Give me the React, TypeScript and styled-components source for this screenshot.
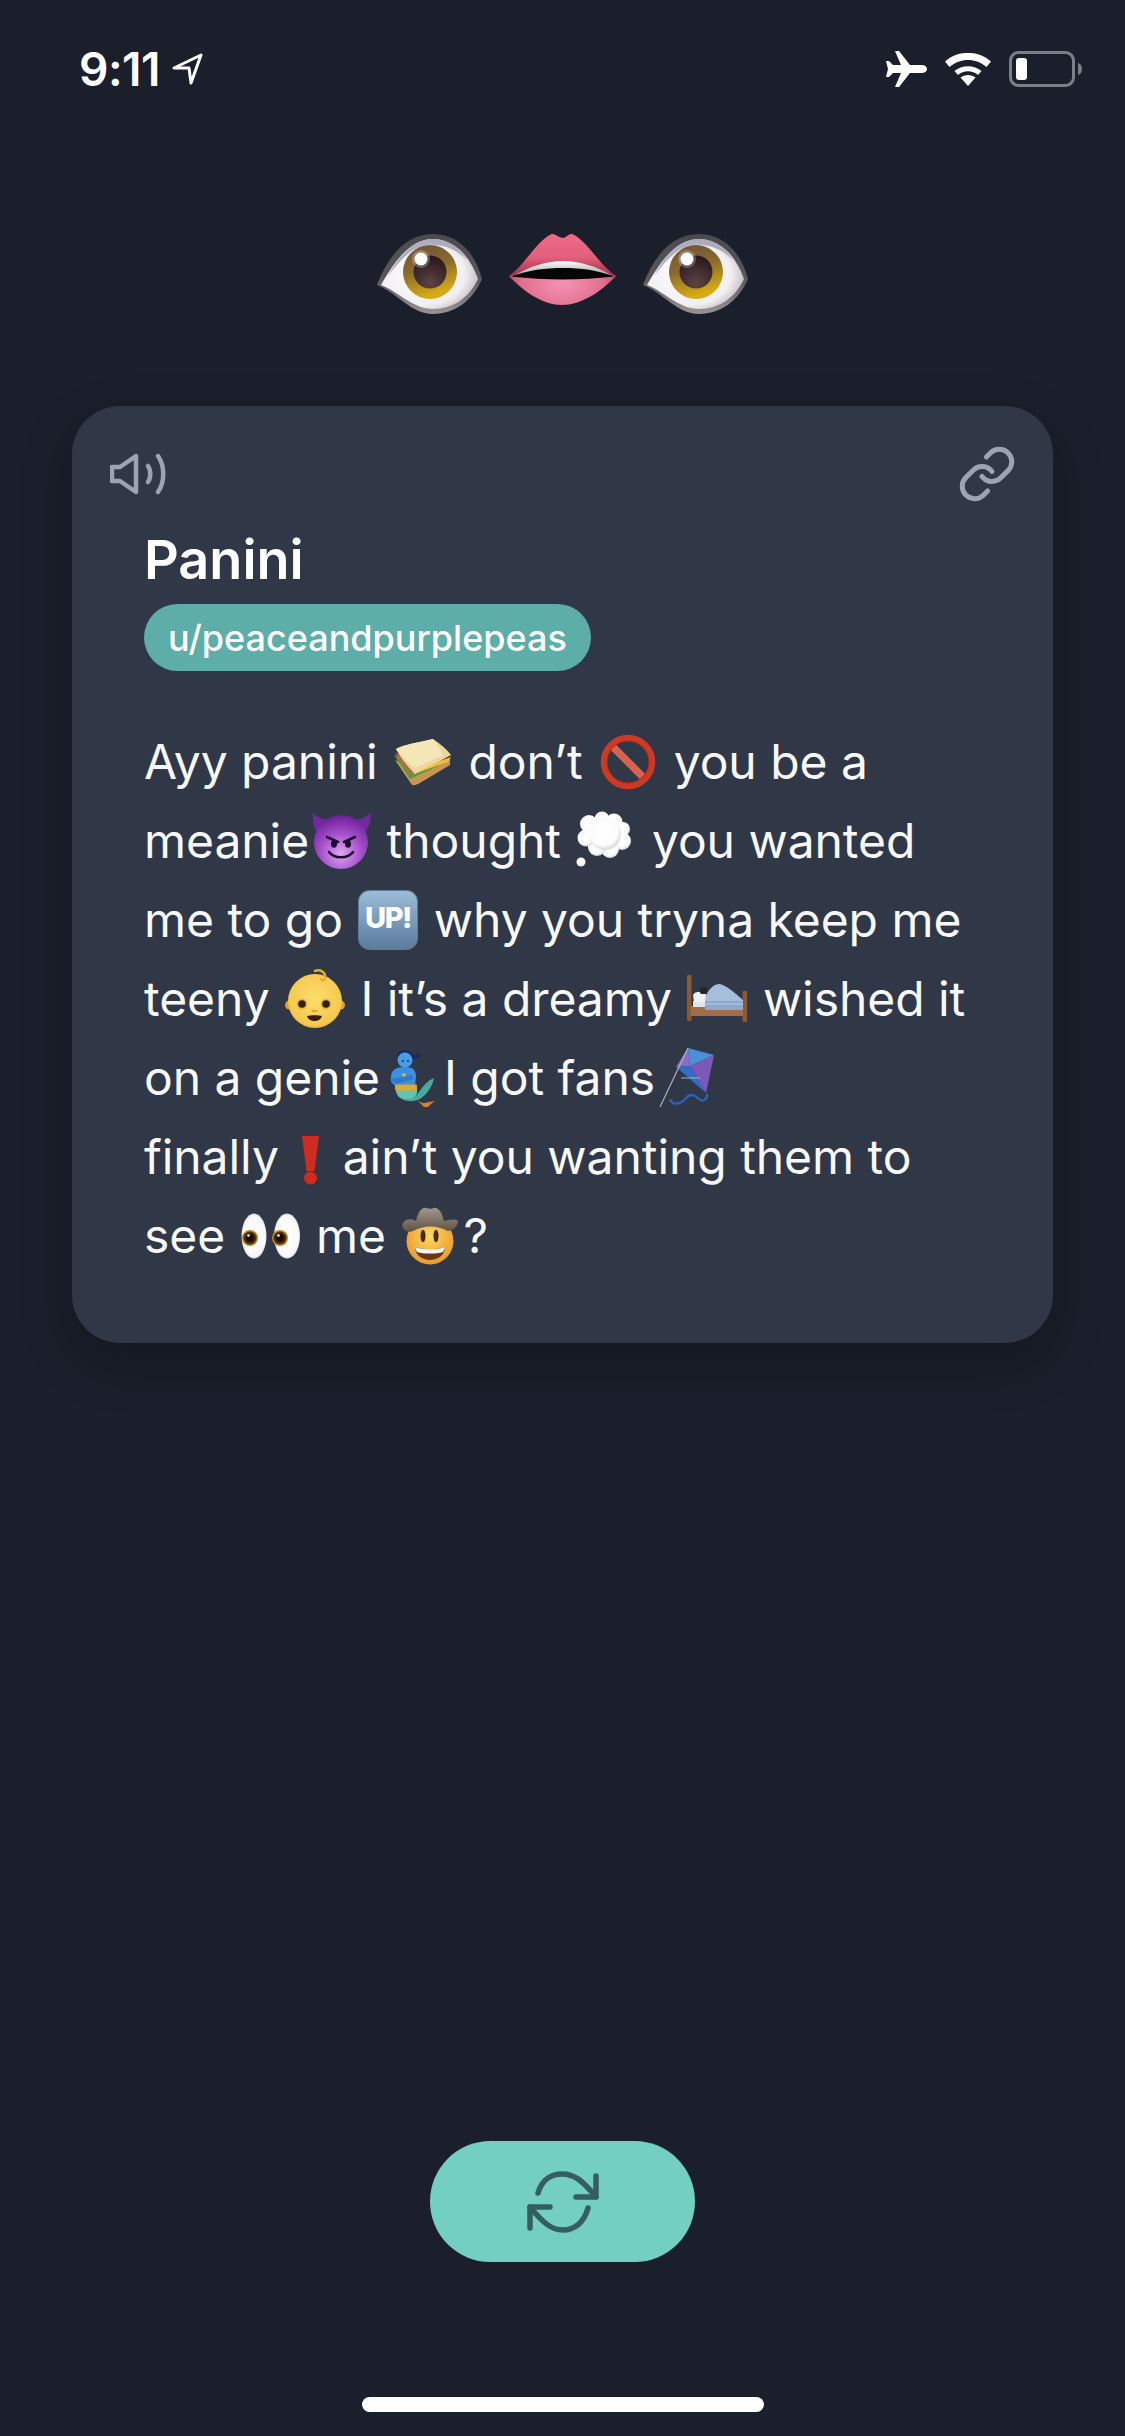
import React from "react";
import styled, { createGlobalStyle } from "styled-components";

const Global = createGlobalStyle`
  html, body { margin: 0; padding: 0; background: #1b1f2b; }
`;

const Screen = styled.div`
  width: 1125px;
  height: 2436px;
  background: #1b1f2b;
  display: flex;
  flex-direction: column;
  font-family: Inter, "Liberation Sans", sans-serif;
  color: #fff;
  overflow: hidden;
`;

const StatusBar = styled.header`
  height: 138px;
  padding: 50px 42px 0 79px;
  box-sizing: border-box;
  display: flex;
  justify-content: space-between;
  align-items: flex-start;
`;

const StatusGroup = styled.div<{ $gap: number }>`
  display: flex;
  align-items: center;
  gap: ${(p) => p.$gap}px;
  height: 38px;
`;

const Clock = styled.span`
  font-size: 46px;
  font-weight: 600;
  letter-spacing: -0.5px;
  line-height: 38px;
`;

const FaceRow = styled.div`
  height: 268px;
  box-sizing: border-box;
  padding-top: 96px;
  display: flex;
  justify-content: center;
  align-items: flex-start;
  gap: 27px;
`;

const Card = styled.section`
  margin: 0 72px;
  height: 937px;
  box-sizing: border-box;
  padding: 40px 38px 0;
  background: #303747;
  border-radius: 48px;
  box-shadow: 0 20px 50px rgba(0, 0, 0, 0.25);
`;

const CardTools = styled.div`
  display: flex;
  justify-content: space-between;
  align-items: center;
  height: 56px;
`;

const CardBody = styled.div`
  padding: 0 34px;
`;

const Title = styled.h1`
  margin: 23px 0 0;
  font-size: 54px;
  line-height: 70px;
  font-weight: 600;
  color: #fff;
`;

const Pill = styled.span`
  display: inline-flex;
  align-items: center;
  margin-top: 9px;
  height: 67px;
  padding: 0 24px;
  border-radius: 34px;
  background: #5dada8;
  font-size: 36px;
  font-weight: 500;
  color: #fff;
`;

const Lyrics = styled.p`
  margin: 51px 0 0;
  font-size: 48px;
  letter-spacing: -0.05px;
  line-height: 79px;
  font-weight: 400;
  color: #f7f8fa;
`;

const Emoji = styled.svg<{ $w?: number }>`
  display: inline-block;
  width: ${(p) => p.$w ?? 60}px;
  height: 60px;
  margin: 0 2px;
  vertical-align: -13px;
`;

const Spacer = styled.div`
  flex: 1;
`;

const RefreshButton = styled.button`
  align-self: center;
  width: 265px;
  height: 121px;
  border: 0;
  padding: 0;
  border-radius: 61px;
  background: #74cfc3;
  display: flex;
  align-items: center;
  justify-content: center;
`;

const HomeBar = styled.div`
  align-self: center;
  width: 402px;
  height: 15px;
  margin: 135px 0 24px;
  border-radius: 8px;
  background: #fff;
`;

const Eye = ({ id }: { id: string }) => (
  <svg width="105" height="80" viewBox="0 0 105 80">
    <defs>
      <radialGradient id={`${id}s`} cx="0.42" cy="0.5" r="0.62">
        <stop offset="0" stopColor="#fff" />
        <stop offset="0.72" stopColor="#f2eff2" />
        <stop offset="1" stopColor="#bdb5bc" />
      </radialGradient>
      <linearGradient id={`${id}i`} x1="0" y1="0" x2="0.3" y2="1">
        <stop offset="0" stopColor="#6a503d" />
        <stop offset="0.5" stopColor="#8a6a2c" />
        <stop offset="1" stopColor="#d8ab12" />
      </linearGradient>
      <radialGradient id={`${id}p`} cx="0.5" cy="0.85" r="0.8">
        <stop offset="0" stopColor="#5e4244" />
        <stop offset="1" stopColor="#2b1a1d" />
      </radialGradient>
      <linearGradient id={`${id}o`} x1="0" y1="0" x2="0" y2="1">
        <stop offset="0" stopColor="#4a494d" />
        <stop offset="0.55" stopColor="#5a585c" />
        <stop offset="1" stopColor="#9a9297" />
      </linearGradient>
    </defs>
    <path d="M0 51C10 24 28 0 56 0 80 0 98 18 105 45 96 66 78 80 56 80 34 80 22 60 0 51Z" fill={`url(#${id}o)`} />
    <path d="M4 51C16 30 32 5 56 5 78 5 94 24 101 45 92 64 76 75 56 75 36 75 22 58 4 51Z" fill={`url(#${id}s)`} />
    <path d="M11 42C20 24 36 5 56 5 70 5 82 13 90 26 78 14 64 10 50 11 34 13 22 28 11 42Z" fill="#a5a1b6" opacity="0.85" />
    <circle cx="53" cy="38" r="27" fill={`url(#${id}i)`} />
    <circle cx="53" cy="38" r="16.500" fill={`url(#${id}p)`} />
    <circle cx="44" cy="25" r="9" fill="#fff" opacity="0.25" />
    <circle cx="44" cy="25" r="6.500" fill="#fff" />
  </svg>
);

const Lips = () => (
  <svg width="107" height="71" viewBox="0 0 107 71">
    <defs>
      <linearGradient id="lu" x1="0" y1="0" x2="0" y2="1">
        <stop offset="0" stopColor="#ef6a88" />
        <stop offset="0.55" stopColor="#e2607c" />
        <stop offset="1" stopColor="#a82c48" />
      </linearGradient>
      <radialGradient id="ll" cx="0.5" cy="0.68" r="0.55">
        <stop offset="0" stopColor="#f494b6" />
        <stop offset="0.7" stopColor="#e26f8e" />
        <stop offset="1" stopColor="#b83d5c" />
      </radialGradient>
      <linearGradient id="lt" x1="0" y1="0" x2="0" y2="1">
        <stop offset="0" stopColor="#fff" />
        <stop offset="1" stopColor="#8f8f8f" />
      </linearGradient>
    </defs>
    <path d="M0 42C14 34 28 6 43 0 47 0 50 4 54 4 57 4 59 0 63 0 78 6 92 34 107 42 92 58 72 71 53 71 34 71 15 58 0 42Z" fill="url(#ll)" />
    <path d="M0 42C14 34 28 6 43 0 47 0 50 4 54 4 57 4 59 0 63 0 78 6 92 34 107 42L53 38Z" fill="url(#lu)" />
    <path d="M6 41C22 32 38 27 54 27 70 27 86 32 102 41L54 44Z" fill="url(#lt)" />
    <path d="M2 42.500C20 36 36 34 54 34 72 34 88 36 105 42.500 88 44.500 70 45.500 54 45.500 36 45.500 20 44.500 2 42.500Z" fill="#050505" />
  </svg>
);

const Sandwich = () => (
  <Emoji viewBox="0 0 60 60">
    <path d="M2 28L19 53C24 54 28 50 32 48L57 33 57 27 20 36Z" fill="#c7954f" />
    <path d="M1 23L17 47 56 29 20 30Z" fill="#5a9a3e" />
    <path d="M2 21L18 42 52 29 22 27Z" fill="#cf5a47" />
    <path d="M20 38L58 25 55 30 21 42Z" fill="#f2bd3f" />
    <path d="M3 17C12 12 28 10 40 7 48 12 54 18 58 23 46 30 32 36 22 42 14 34 8 26 3 17Z" fill="#ecd89c" />
    <path d="M3 17C12 12 28 10 40 7 44 12 48 18 50 23 40 28 30 32 22 36 14 30 8 24 3 17Z" fill="#f4e6b6" />
  </Emoji>
);

const NoSign = () => (
  <Emoji viewBox="0 0 60 60">
    <path d="M13 13L47 47" stroke="#d9624e" strokeWidth="7.500" />
    <circle cx="30" cy="30" r="24" fill="none" stroke="#cc3a24" strokeWidth="6.500" />
    <circle cx="30" cy="30" r="21" fill="none" stroke="#a82a1a" strokeWidth="1" />
  </Emoji>
);

const Devil = () => (
  <Emoji viewBox="0 0 60 60">
    <defs>
      <radialGradient id="dv" cx="0.5" cy="0.72" r="0.75">
        <stop offset="0" stopColor="#dda6f2" />
        <stop offset="0.5" stopColor="#a651cc" />
        <stop offset="1" stopColor="#661a96" />
      </radialGradient>
    </defs>
    <path d="M2 2C1 12 3 20 10 26L22 10C14 9 7 7 2 2ZM60 2C60 12 57 20 50 26L38 10C46 9 54 7 60 2Z" fill="#6f2a9e" />
    <circle cx="30" cy="31" r="27" fill="url(#dv)" />
    <path d="M16 26L27 31M44 26L33 31" stroke="#1f0b30" strokeWidth="2.600" strokeLinecap="round" />
    <ellipse cx="23" cy="33" rx="3" ry="3.800" fill="#1f0b30" />
    <ellipse cx="37" cy="33" rx="3" ry="3.800" fill="#1f0b30" />
    <path d="M18 41C23 48 37 48 42 41" fill="none" stroke="#1f0b30" strokeWidth="2.600" strokeLinecap="round" />
  </Emoji>
);

const Thought = () => (
  <Emoji viewBox="0 0 60 60">
    <defs>
      <radialGradient id="th" cx="0.45" cy="0.4" r="0.6">
        <stop offset="0" stopColor="#fff" />
        <stop offset="0.75" stopColor="#fcfcfc" />
        <stop offset="1" stopColor="#d6d6d8" />
      </radialGradient>
    </defs>
    <g fill="url(#th)">
      <circle cx="13" cy="13" r="9" />
      <circle cx="26" cy="8" r="7.500" />
      <circle cx="38" cy="11" r="8.500" />
      <circle cx="47" cy="18" r="7" />
      <circle cx="46" cy="30" r="9" />
      <circle cx="34" cy="38" r="9" />
      <circle cx="21" cy="36" r="9" />
      <circle cx="10" cy="27" r="8.500" />
      <circle cx="29" cy="23" r="16" />
      <circle cx="5" cy="51" r="4.500" />
    </g>
  </Emoji>
);

const UpButton = () => (
  <Emoji viewBox="0 0 60 60">
    <defs>
      <linearGradient id="up" x1="0" y1="0" x2="0" y2="1">
        <stop offset="0" stopColor="#9dbcd9" />
        <stop offset="1" stopColor="#5a7b9c" />
      </linearGradient>
    </defs>
    <rect x="0.500" y="0.500" width="59" height="59" rx="11" fill="url(#up)" stroke="#5f7e9d" />
    <text x="30" y="38" textAnchor="middle" fontFamily="Inter, sans-serif" fontWeight="800" fontSize="29" letterSpacing="-1.500" fill="#fff">UP!</text>
  </Emoji>
);

const Baby = () => (
  <Emoji viewBox="0 0 60 60">
    <defs>
      <radialGradient id="bb" cx="0.5" cy="0.45" r="0.65">
        <stop offset="0" stopColor="#fcdc6c" />
        <stop offset="0.75" stopColor="#f6c94f" />
        <stop offset="1" stopColor="#dd9a28" />
      </radialGradient>
    </defs>
    <circle cx="4.500" cy="36" r="4.500" fill="#e2a02c" />
    <circle cx="55.500" cy="36" r="4.500" fill="#e2a02c" />
    <circle cx="30" cy="32" r="27" fill="url(#bb)" />
    <path d="M30 2C35 0 41 3 40 9 39.500 12 37 12 36 10" fill="none" stroke="#e5ac33" strokeWidth="2.500" strokeLinecap="round" />
    <circle cx="17" cy="35" r="5.500" fill="#e8b544" />
    <circle cx="41" cy="35" r="5.500" fill="#e8b544" />
    <circle cx="17" cy="35" r="3.800" fill="#33210f" />
    <circle cx="41" cy="35" r="3.800" fill="#33210f" />
    <path d="M27 41C28 43 31 43 32 41" fill="none" stroke="#d29230" strokeWidth="1.600" />
    <path d="M22 47C26 46 34 46 37 47 36 51 32 52 29.500 52 27 52 23 51 22 47Z" fill="#3b1f0e" />
  </Emoji>
);

const Bed = () => (
  <Emoji viewBox="0 0 60 60">
    <rect x="0" y="6" width="4.500" height="46" rx="1" fill="#8a5a36" />
    <rect x="55.500" y="22" width="4.500" height="31" rx="1" fill="#8a5a36" />
    <rect x="4" y="37" width="52" height="10" fill="#a06d44" />
    <rect x="6" y="32" width="50" height="6" fill="#dfe3ea" />
    <path d="M6 26C8 22 15 22 19 25L20 33H7Z" fill="#eef0f4" />
    <path d="M12 22C13 18 17 17 20 19L21 25 14 25Z" fill="#24262c" />
    <path d="M18 32C18 24 26 14 33 15 42 18 50 26 56 31V41H18Z" fill="#a6bede" />
    <path d="M18 32H56V41H18Z" fill="#8fa9cd" />
    <path d="M18 35H56" stroke="#b7cbe4" strokeWidth="1" />
  </Emoji>
);

const Genie = () => (
  <Emoji viewBox="0 0 60 60">
    <path d="M15 8C16 2 25 0 28 4 31 8 36 9 38 4 39 10 33 12 28 10Z" fill="#122a68" />
    <circle cx="23" cy="12" r="7.500" fill="#4a9be8" />
    <ellipse cx="21" cy="13" rx="1" ry="1.300" fill="#1c3f7c" />
    <ellipse cx="26" cy="13" rx="1" ry="1.300" fill="#1c3f7c" />
    <path d="M9 29C9 22 14 19 23 19 32 19 34 23 34 29L33 38H14C10 36 8 33 9 29Z" fill="#3d8fe0" />
    <path d="M8 31L30 27 32 31 14 36Z" fill="#2f79c8" />
    <circle cx="22" cy="27" r="1.800" fill="#e3b43a" />
    <path d="M15 42C15 50 22 52 28 51 38 49 38 36 52 30 50 40 44 47 38 51 30 55 18 54 14 44Z" fill="#46ab9c" />
    <path d="M14 42H35C36 44 34 50 28 51 20 52 15 50 14 42Z" fill="#5fc4b2" />
    <rect x="13" y="36.500" width="22" height="6" rx="1" fill="#e2a92f" />
    <path d="M35 52C40 56 44 55 47 54L53 53 49 56 46 59H42Z" fill="#c9852b" />
  </Emoji>
);

const Kite = () => (
  <Emoji viewBox="0 0 60 60">
    <path d="M31 0L19 19 33 18Z" fill="#8a6cc8" />
    <path d="M31 0L57 7 33 18Z" fill="#4a90d9" />
    <path d="M19 19L33 18 49 45Z" fill="#2f6fc4" />
    <path d="M57 7L33 18 49 45Z" fill="#7d58b8" />
    <path d="M31 0L3 59M24 30H43" stroke="#aab2bb" strokeWidth="1.200" fill="none" />
    <path d="M13 52C17 58 24 56 29 50 33 45 38 47 42 51 45 54 50 52 50 47" fill="none" stroke="#2a62b8" strokeWidth="2.400" strokeLinecap="round" />
  </Emoji>
);

const Exclaim = () => (
  <Emoji $w={33} viewBox="0 0 33 60">
    <path d="M8 9H25L20.500 44H12.500Z" fill="#cf2c20" />
    <circle cx="16.500" cy="51" r="6.500" fill="#cf2c20" />
  </Emoji>
);

const LookEyes = () => (
  <Emoji viewBox="0 0 60 60">
    <defs>
      <radialGradient id="ew" cx="0.5" cy="0.5" r="0.55">
        <stop offset="0" stopColor="#fff" />
        <stop offset="0.8" stopColor="#f8f8f8" />
        <stop offset="1" stopColor="#cfcfd2" />
      </radialGradient>
    </defs>
    <ellipse cx="13" cy="30" rx="12.500" ry="22.500" fill="url(#ew)" />
    <ellipse cx="46" cy="30" rx="13" ry="22.500" fill="url(#ew)" />
    <circle cx="9" cy="32" r="8" fill="#b98a2c" />
    <circle cx="39" cy="32" r="8" fill="#b98a2c" />
    <circle cx="9" cy="32" r="6.500" fill="#4e2c0c" />
    <circle cx="39" cy="32" r="6.500" fill="#4e2c0c" />
    <circle cx="9" cy="32" r="4" fill="#170d04" />
    <circle cx="39" cy="32" r="4" fill="#170d04" />
    <circle cx="7.500" cy="29.500" r="1.300" fill="#fff" />
    <circle cx="37.500" cy="29.500" r="1.300" fill="#fff" />
  </Emoji>
);

const Cowboy = () => (
  <Emoji viewBox="0 0 60 60">
    <defs>
      <radialGradient id="cb" cx="0.5" cy="0.4" r="0.65">
        <stop offset="0" stopColor="#fcd95e" />
        <stop offset="1" stopColor="#e8942a" />
      </radialGradient>
      <linearGradient id="ch" x1="0" y1="0" x2="0" y2="1">
        <stop offset="0" stopColor="#a3968a" />
        <stop offset="1" stopColor="#5e5146" />
      </linearGradient>
    </defs>
    <g transform="translate(1 1)">
      <circle cx="28" cy="34" r="23.500" fill="url(#cb)" />
      <path d="M0 18C2 12 8 11 14 14 16 5 20 0 24 1 27 2 29 2 32 1 36 0 40 5 42 14 47 13 53 11 56 14 56 20 50 24 46 24 35 18 22 18 11 24 6 26 1 24 0 18Z" fill="url(#ch)" />
      <ellipse cx="21" cy="29" rx="2.500" ry="6.200" fill="#4a2c10" />
      <ellipse cx="34" cy="29" rx="2.500" ry="6.200" fill="#4a2c10" />
      <path d="M13 40C20 43 36 43 43 40 43 48 36 53 28 53 20 53 13 48 13 40Z" fill="#6b3a12" />
      <path d="M13 40C20 43 36 43 43 40 42.500 42 42 43.500 41 45 34 47 22 47 15 45 14 43.500 13.500 42 13 40Z" fill="#f6f6f6" />
    </g>
  </Emoji>
);

const App = () => (
  <>
    <Global />
    <Screen>
      <StatusBar>
        <StatusGroup $gap={12}>
          <Clock>9:11</Clock>
          <svg width="32" height="32" viewBox="0 0 32 32">
            <path d="M2 15L29 2 19 30 17 15Z" fill="none" stroke="#fff" strokeWidth="3" strokeLinejoin="round" />
          </svg>
        </StatusGroup>
        <StatusGroup $gap={18}>
          <svg width="41" height="36" viewBox="0 0 41 36">
            <path d="M9 0H13L24 14H36C40 14 41 17 41 18 41 19 40 22 36 22H24L13 36H9L15 22H7L3 26H0L2 18 0 10H3L7 14H15Z" fill="#fff" />
          </svg>
          <svg width="46" height="33" viewBox="0 0 46 33">
            <path d="M23 33L15.500 24.500C19.500 21 26.500 21 30.500 24.500Z" fill="#fff" />
            <path d="M9.500 18C16.500 11.500 29.500 11.500 36.500 18L33 22C27.500 17 18.500 17 13 22Z" fill="#fff" />
            <path d="M0 8.500C13 -3 33 -3 46 8.500L41.500 14C31 4.500 15 4.500 4.500 14Z" fill="#fff" />
          </svg>
          <svg width="74" height="36" viewBox="0 0 74 36">
            <rect x="1.500" y="1.500" width="63" height="33" rx="8" fill="none" stroke="#7c7f86" strokeWidth="3" />
            <rect x="7" y="7" width="11" height="22" rx="3" fill="#fff" />
            <path d="M69 12C72 13 73 15 73 18 73 21 72 23 69 24Z" fill="#7c7f86" />
          </svg>
        </StatusGroup>
      </StatusBar>

      <FaceRow>
        <Eye id="e1" />
        <Lips />
        <Eye id="e2" />
      </FaceRow>

      <Card>
        <CardTools>
          <svg width="56" height="42" viewBox="0 0 56 42" fill="none" stroke="#9aa4b2" strokeWidth="4.500" strokeLinecap="round" strokeLinejoin="round">
            <path d="M2 14H10L26 3V39L10 28H2Z" />
            <path d="M38 13C41 17 41 25 38 29" />
            <path d="M48 3C55 13 55 29 48 39" />
          </svg>
          <svg width="56" height="56" viewBox="0.75 0.75 22.5 22.5" fill="none" stroke="#9aa4b2" strokeWidth="2" strokeLinecap="round" strokeLinejoin="round">
            <path d="M10 13a5 5 0 0 0 7.540.54l3-3a5 5 0 0 0-7.070-7.070l-1.720 1.710" />
            <path d="M14 11a5 5 0 0 0-7.540-.54l-3 3a5 5 0 0 0 7.070 7.070l1.710-1.710" />
          </svg>
        </CardTools>
        <CardBody>
          <Title>Panini</Title>
          <Pill>u/peaceandpurplepeas</Pill>
          <Lyrics>
            Ayy panini <Sandwich /> don’t <NoSign /> you be a meanie<Devil /> thought <Thought /> you wanted me to go <UpButton /> why you tryna keep me teeny <Baby /> I it’s a dreamy <Bed /> wished it on a genie<Genie />I got fans<Kite />
            <br />
            finally <Exclaim /> ain’t you wanting them to see <LookEyes /> me <Cowboy />?
          </Lyrics>
        </CardBody>
      </Card>

      <Spacer />
      <RefreshButton aria-label="refresh">
        <svg width="74" height="62" viewBox="0 0 74 62" fill="none" stroke="#355e60" strokeWidth="5.500" strokeLinecap="round" strokeLinejoin="round">
          <path d="M12 22C16 8 26 3 36 3 48 3 56 9 70 26" />
          <path d="M70 5V26H50" />
          <path d="M62 37C58 52 48 59 37 59 26 59 18 53 4 36" />
          <path d="M4 57V36H24" />
        </svg>
      </RefreshButton>
      <HomeBar />
    </Screen>
  </>
);

export default App;
